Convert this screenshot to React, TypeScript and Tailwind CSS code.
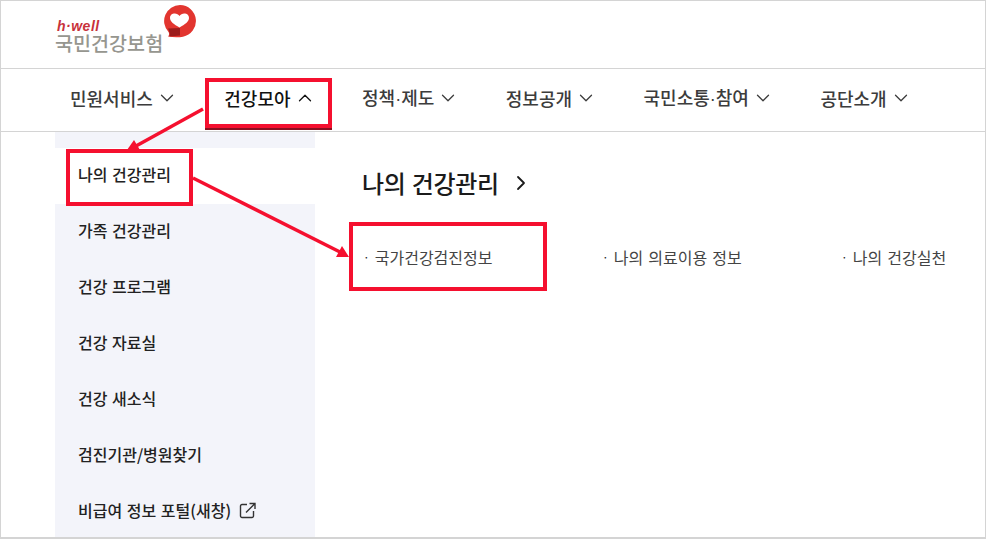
import { ChevronDown, ChevronRight, ChevronUp } from "lucide-react";

const navItems = [
  { before: "민원서비스", after: "", open: false },
  { before: "건강모아", after: "", open: true },
  { before: "정책", after: "제도", open: false },
  { before: "정보공개", after: "", open: false },
  { before: "국민소통", after: "참여", open: false },
  { before: "공단소개", after: "", open: false },
];

const sideItems = [
  "가족 건강관리",
  "건강 프로그램",
  "건강 자료실",
  "건강 새소식",
  "검진기관/병원찾기",
];

const subItems = ["국가건강검진정보", "나의 의료이용 정보", "나의 건강실천"];

const Logo = () => (
  <div className="relative h-[67px] w-[145px] select-none">
    <span className="absolute left-[2px] top-[19px] font-['Liberation_Sans',sans-serif] text-[14px] font-bold italic leading-[12px] tracking-[0.5px] text-[#c8323a]">
      h·well
    </span>
    <span className="absolute left-0 top-[32px] text-[19.6px] font-medium leading-[20px] text-[#96968f]">
      국민건강보험
    </span>
    <svg className="absolute left-[108px] top-[3px]" width="34" height="34" viewBox="0 0 34 34">
      <path d="M17 1a16 16 0 0 1 3 31.700c-4 .8-10 .8-15-.2 1.500-1.500 1.500-3 .5-4.500A16 16 0 0 1 17 1z" fill="#e2352f" />
      <path d="M16.500 12c2-3.500 9.500-3.500 9.500 2 0 3.500-4 6.500-9.500 9.500C11 20.500 7 17.500 7 14c0-5.500 7.500-5.500 9.500-2z" fill="#ffffff" />
      <path d="M5 24.500l12-.5v7.500l-10.500 1c.5-2.500 0-5-1.500-8z" fill="#9c1c1c" />
    </svg>
  </div>
);

const Annotations = () => (
  <>
    <div className="pointer-events-none absolute left-[204px] top-[77px] h-[50px] w-[127px] border-4 border-[#f5102f] shadow-[0_2px_0_#8a1020]" />
    <div className="pointer-events-none absolute left-[65px] top-[148px] h-[57px] w-[127px] border-4 border-[#f5102f]" />
    <div className="pointer-events-none absolute left-[348px] top-[221px] h-[69px] w-[198px] border-4 border-[#f5102f]" />
    <svg className="pointer-events-none absolute -left-px -top-px" width="986" height="539" viewBox="0 0 986 539">
      <path d="M203 109L136 146" stroke="#f5102f" strokeWidth="3.500" fill="none" />
      <path d="M127 150L134 140L140 150z" fill="#f5102f" />
      <path d="M193 178L340 252" stroke="#f5102f" strokeWidth="3.500" fill="none" />
      <path d="M349 257L336 257L342 246z" fill="#f5102f" />
    </svg>
  </>
);

const App = () => {
  return (
    <div className="relative h-[539px] w-[986px] overflow-hidden border border-b-2 border-[#d4d4d4] bg-white font-['Noto_Sans_CJK_KR',sans-serif] text-[#222222]">
      <header className="h-[68px] border-b border-[#d4d4d4] pl-[54px]">
        <Logo />
      </header>

      <nav className="flex h-[63px] items-center gap-[46.5px] border-b border-[#d4d4d4] pb-[4px] pl-[69px]">
        {navItems.map((item) => (
          <div
            key={item.before}
            className={`flex items-center gap-[3px] text-[18px] font-medium ${
              item.open ? "text-[#111111]" : "text-[#3c3c3c]"
            }`}
          >
            <span>
              {item.before}
              {item.after && <span className="font-['Liberation_Sans',sans-serif]">·</span>}
              {item.after}
            </span>
            {item.open ? (
              <ChevronUp size={22} strokeWidth={1.4} />
            ) : (
              <ChevronDown size={22} strokeWidth={1.4} />
            )}
          </div>
        ))}
      </nav>

      <main className="flex">
        <aside className="ml-[54px] w-[260px] bg-[#f3f4fa] pt-[16px] [word-spacing:1px]">
          <div className="flex h-[56px] items-center bg-white pb-[4px] pl-[23px] text-[16px] font-medium">
            나의 건강관리
          </div>
          {sideItems.map((label) => (
            <div key={label} className="flex h-[56px] items-center pb-[4px] pl-[23px] text-[16px] font-medium">
              {label}
            </div>
          ))}
          <div className="flex h-[56px] items-center gap-[8px] pb-[4px] pl-[23px] text-[16px] font-medium">
            비급여 정보 포털(새창)
            <svg width="17" height="17" viewBox="0 0 17 17" fill="none" stroke="#333333" strokeWidth="1.400">
              <path d="M8 2.500H3a1.500 1.500 0 0 0-1.500 1.500v10A1.500 1.500 0 0 0 3 15.500h10a1.500 1.500 0 0 0 1.500-1.500V9" />
              <path d="M7 10.500L15.500 2M10.500 1.500h5.500V7" />
            </svg>
          </div>
        </aside>

        <section className="flex-1 pl-[47px] pt-[31px]">
          <h2 className="flex items-center gap-[10px] text-[24px] font-medium leading-[40px] tracking-[-0.3px] text-[#1b1b1b] [word-spacing:1px]">
            나의 건강관리
            <ChevronRight size={24} strokeWidth={1.8} />
          </h2>
          <ul className="mt-[42px] grid grid-cols-[239px_239px_auto] pl-[1px]">
            {subItems.map((label) => (
              <li key={label} className="flex items-center gap-[5px] text-[16px] leading-[24px] text-[#444444] [word-spacing:1.5px]">
                <span className="text-[12px] text-[#222222]">·</span>
                {label}
              </li>
            ))}
          </ul>
        </section>
      </main>

      <Annotations />
    </div>
  );
};

export default App;
